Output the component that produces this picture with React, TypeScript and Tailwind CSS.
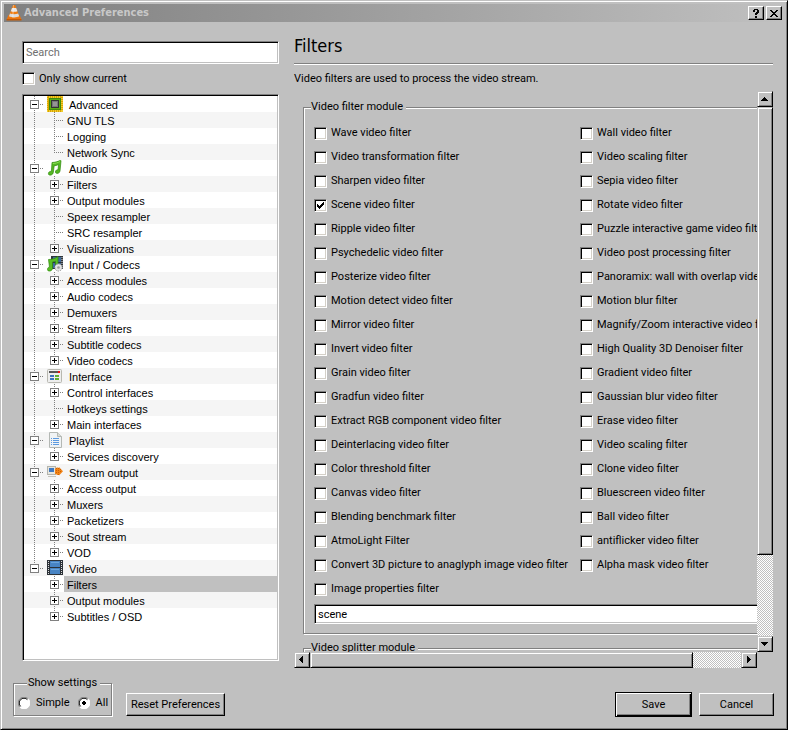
import React from "react";

type TreeItem = {
  label: string;
  icon?: React.ReactNode;
  children?: { label: string; leaf?: boolean; selected?: boolean }[];
};

const raised =
  "bg-[#c0c0c0] border border-t-white border-l-white border-r-black border-b-black shadow-[inset_-1px_-1px_0_#808080]";
const sunken =
  "bg-white border border-t-[#808080] border-l-[#808080] border-r-white border-b-white shadow-[inset_1px_1px_0_#000,inset_-1px_-1px_0_#c0c0c0]";
const scrollPart =
  "bg-[#c0c0c0] border border-t-[#c0c0c0] border-l-[#c0c0c0] border-r-black border-b-black shadow-[inset_1px_1px_0_#fff,inset_-1px_-1px_0_#808080]";
const track =
  "bg-[repeating-conic-gradient(#fff_0_25%,#c0c0c0_0_50%)] bg-[length:2px_2px]";
const etched =
  "border border-[#808080] shadow-[1px_1px_0_#fff,inset_1px_1px_0_#fff]";

/* icons */

const ConeIcon = () => (
  <svg width="16" height="16" viewBox="0 0 16 16">
    <path d="M2.500 10h11L15.500 14.500H.5z" fill="#ea7410" />
    <path d="M.5 14h15v1.500H.5z" fill="#c05a08" />
    <path d="M7 0h2.200l4.300 12c-2.500 1.600-8.500 1.600-11 0z" fill="#f07c10" />
    <path d="M6 3h4.200l1.200 3.200c-1.500.8-5 .8-6.600 0z" fill="#e8e8e8" />
    <path d="M4 8.500c2.500 1 5.500 1 8.200 0l1 2.800c-2.800 1.500-7.400 1.500-10.200 0z" fill="#dcdcdc" />
    <path d="M7 0h1l-.5 12.500H6z" fill="#fff" opacity=".35" />
  </svg>
);

const ChipIcon = () => (
  <svg width="16" height="16" viewBox="0 0 16 16" shapeRendering="crispEdges">
    <rect width="16" height="16" fill="#f0cc30" />
    <path
      d="M1.500 0v16M3.500 0v16M5.500 0v16M7.500 0v16M9.500 0v16M11.500 0v16M13.500 0v16"
      stroke="#d8a400"
    />
    <path
      d="M0 1.500h2M0 3.500h2M0 5.500h2M0 7.500h2M0 9.500h2M0 11.500h2M0 13.500h2M14 1.500h2M14 3.500h2M14 5.500h2M14 7.500h2M14 9.500h2M14 11.500h2M14 13.500h2"
      stroke="#d8a400"
    />
    <rect x="2" y="2" width="12" height="12" fill="#3f8a0c" />
    <rect x="3" y="3" width="10" height="10" fill="#5aac14" />
    <rect x="4" y="4" width="8" height="8" fill="#333" />
    <rect x="5" y="5" width="6" height="6" fill="#777" />
    <rect x="6" y="6" width="4" height="4" fill="#949494" />
  </svg>
);

const NoteIcon = () => (
  <svg width="16" height="16" viewBox="0 0 16 16">
    <path
      d="M5 2.500C8 2.500 11 1.500 13.500.3l.5.5-1 10.200c-.2 2.800-4.600 3.200-4.600 1C8.400 10.200 10 9.600 11 9.800L11.600 4.500C10 5.400 8.500 5.700 7.200 5.700L6.300 12.500c-.3 3-4.900 3.500-4.900 1.200 0-1.900 1.800-2.500 3-2.300z"
      fill="#55b823"
      stroke="#2f8a10"
      strokeWidth=".7"
    />
    <path d="M5.800 3.500c2.500 0 5-.8 7.200-1.900" stroke="#8de05a" fill="none" />
  </svg>
);

const CodecIcon = () => (
  <svg width="16" height="16" viewBox="0 0 16 16">
    <rect x="4" y="0" width="12" height="13" fill="#30363c" />
    <rect x="6" y="1" width="8" height="5" fill="#3d6a9c" />
    <rect x="6" y="7" width="8" height="5" fill="#3d6a9c" />
    <path d="M15 1v12" stroke="#ddd" strokeDasharray="1 1" />
    <path
      d="M1.500 3.500C5 3.500 8.500 2.500 11 .5V8.500H8.500V5.200L5.500 6V12.500c-.3 3-5 3.500-5 1 0-1.800 1.200-2.500 2-2.300z"
      fill="#58bd23"
      stroke="#2f8a10"
      strokeWidth=".7"
    />
    <circle cx="11.500" cy="11.500" r="3.600" fill="#e4e4e4" stroke="#999" strokeDasharray="1.500 1" />
    <circle cx="11.500" cy="11.500" r="1.300" fill="#999" />
  </svg>
);

const InterfaceIcon = () => (
  <svg width="16" height="16" viewBox="0 0 16 16">
    <rect x=".5" y="1.500" width="14" height="13" rx="1" fill="#eee" stroke="#b8b8b0" />
    <path d="M2 3h11v2H2z" fill="#555" />
    <path d="M11 3h2v2h-2z" fill="#e11" />
    <path d="M3 7h4v2H3zM3 10h4v2H3z" fill="#3a72c0" />
    <path d="M8 7h4v2H8zM8 10h4v2H8z" fill="#60b030" />
  </svg>
);

const PlaylistIcon = () => (
  <svg width="16" height="16" viewBox="0 0 16 16">
    <path d="M2.500.5h8l4 4v11h-12z" fill="#f0f3f5" stroke="#b4b8b4" />
    <path d="M10.500.5v4h4" fill="#d8dcd8" stroke="#b4b8b4" />
    <path
      d="M4 6.500h1M6 6.500h6M4 8.500h1M6 8.500h6M4 10.500h1M6 10.500h6M4 12.500h1M6 12.500h6"
      stroke="#5c9ae0"
    />
  </svg>
);

const StreamIcon = () => (
  <svg width="16" height="16" viewBox="0 0 16 16">
    <rect x=".5" y="2.500" width="8" height="8" fill="#e6e6e0" stroke="#b4b4ac" />
    <rect x="2" y="4" width="5" height="4" fill="#3f78c0" />
    <path d="M1 12.500h8" stroke="#c4c4bc" />
    <path d="M8 4.500h1.500V3.500h2V4.500h.5V3l4 4.300-4 4.200V10h-.5v1h-2v-1H8z" fill="#f08418" />
    <path d="M9.500 4v6M11.500 4v7M13.500 5v4" stroke="#d06000" strokeDasharray="1 1" />
  </svg>
);

const FilmIcon = () => (
  <svg width="16" height="16" viewBox="0 0 16 16" shapeRendering="crispEdges">
    <rect width="16" height="15" fill="#2c3238" />
    <rect x="3" y="1" width="10" height="6" fill="#4884c4" />
    <rect x="3" y="8" width="10" height="6" fill="#4884c4" />
    <path d="M4 2.500h8M4 9.500h8" stroke="#6aa4dc" />
    <path d="M1.500 1v14M14.500 1v14" stroke="#ddd" strokeDasharray="1 1" />
  </svg>
);

const tree: TreeItem[] = [
  {
    label: "Advanced",
    icon: <ChipIcon />,
    children: [
      { label: "GNU TLS", leaf: true },
      { label: "Logging", leaf: true },
      { label: "Network Sync", leaf: true },
    ],
  },
  {
    label: "Audio",
    icon: <NoteIcon />,
    children: [
      { label: "Filters" },
      { label: "Output modules" },
      { label: "Speex resampler", leaf: true },
      { label: "SRC resampler", leaf: true },
      { label: "Visualizations" },
    ],
  },
  {
    label: "Input / Codecs",
    icon: <CodecIcon />,
    children: [
      { label: "Access modules" },
      { label: "Audio codecs" },
      { label: "Demuxers" },
      { label: "Stream filters" },
      { label: "Subtitle codecs" },
      { label: "Video codecs" },
    ],
  },
  {
    label: "Interface",
    icon: <InterfaceIcon />,
    children: [
      { label: "Control interfaces" },
      { label: "Hotkeys settings", leaf: true },
      { label: "Main interfaces" },
    ],
  },
  {
    label: "Playlist",
    icon: <PlaylistIcon />,
    children: [{ label: "Services discovery" }],
  },
  {
    label: "Stream output",
    icon: <StreamIcon />,
    children: [
      { label: "Access output" },
      { label: "Muxers" },
      { label: "Packetizers" },
      { label: "Sout stream" },
      { label: "VOD" },
    ],
  },
  {
    label: "Video",
    icon: <FilmIcon />,
    children: [
      { label: "Filters", selected: true },
      { label: "Output modules" },
      { label: "Subtitles / OSD" },
    ],
  },
];

const filters = [
  ["Wave video filter", "Wall video filter"],
  ["Video transformation filter", "Video scaling filter"],
  ["Sharpen video filter", "Sepia video filter"],
  ["Scene video filter", "Rotate video filter"],
  ["Ripple video filter", "Puzzle interactive game video filter"],
  ["Psychedelic video filter", "Video post processing filter"],
  ["Posterize video filter", "Panoramix: wall with overlap video filter"],
  ["Motion detect video filter", "Motion blur filter"],
  ["Mirror video filter", "Magnify/Zoom interactive video filter"],
  ["Invert video filter", "High Quality 3D Denoiser filter"],
  ["Grain video filter", "Gradient video filter"],
  ["Gradfun video filter", "Gaussian blur video filter"],
  ["Extract RGB component video filter", "Erase video filter"],
  ["Deinterlacing video filter", "Video scaling filter"],
  ["Color threshold filter", "Clone video filter"],
  ["Canvas video filter", "Bluescreen video filter"],
  ["Blending benchmark filter", "Ball video filter"],
  ["AtmoLight Filter", "antiflicker video filter"],
  ["Convert 3D picture to anaglyph image video filter", "Alpha mask video filter"],
  ["Image properties filter"],
];

/* one 20px wide cell of the dotted tree lines */
const Branch = ({
  box,
  line = "full",
  arm = true,
}: {
  box?: "plus" | "minus";
  line?: "full" | "top" | "none";
  arm?: boolean;
}) => (
  <svg
    className="shrink-0"
    width="20"
    height="16"
    viewBox="0 0 20 16"
    shapeRendering="crispEdges"
    fill="none"
    stroke="#808080"
  >
    {line !== "none" && (
      <path d={line === "full" ? "M10.500 0v16" : "M10.500 0v9"} strokeDasharray="1 1" />
    )}
    {arm && <path d="M10 8.500h10" strokeDasharray="1 1" />}
    {box && (
      <>
        <rect x="6.500" y="4.500" width="8" height="8" fill="#fff" />
        <path d="M8 8.500h5" stroke="#000" />
        {box === "plus" && <path d="M10.500 6v5" stroke="#000" />}
      </>
    )}
  </svg>
);

const CheckBox = ({ label, checked }: { label: string; checked?: boolean }) => (
  <label className="flex items-center gap-1 whitespace-nowrap">
    <span className="grid shrink-0">
      <input
        type="checkbox"
        defaultChecked={checked}
        className="peer [grid-area:1/1] appearance-none w-[13px] h-[13px] bg-white border border-t-[#808080] border-l-[#808080] border-r-white border-b-white shadow-[inset_1px_1px_0_#000,inset_-1px_-1px_0_#d4d0c8]"
      />
      <svg
        className="[grid-area:1/1] invisible peer-checked:visible pointer-events-none"
        width="13"
        height="13"
        viewBox="0 0 13 13"
        shapeRendering="crispEdges"
      >
        <path d="M3 5h1v1h1v1h1v-1h1v-1h1v-1h1v-1h1v3h-1v1h-1v1h-1v1h-1v1h-1v-1h-1v-1h-1z" />
      </svg>
    </span>
    <span>{label}</span>
  </label>
);

const Radio = ({ label, checked }: { label: string; checked?: boolean }) => (
  <label className="flex items-center gap-[6px]">
    <span className="grid shrink-0">
      <input
        type="radio"
        name="show-settings"
        defaultChecked={checked}
        className="peer [grid-area:1/1] appearance-none w-3 h-3 rounded-full bg-white"
      />
      <svg className="[grid-area:1/1] pointer-events-none" width="12" height="12" viewBox="0 0 12 12" fill="none">
        <path d="M1.800 10.200A5.500 5.500 0 0 1 10.200 1.800" stroke="#808080" />
        <path d="M10.200 1.800A5.500 5.500 0 0 1 1.800 10.200" stroke="#fff" />
        <path d="M2.600 9.400A4.500 4.500 0 0 1 9.400 2.600" stroke="#000" />
      </svg>
      <svg
        className="[grid-area:1/1] invisible peer-checked:visible pointer-events-none"
        width="12"
        height="12"
        viewBox="0 0 12 12"
        shapeRendering="crispEdges"
      >
        <path d="M5 4h2v1h1v2h-1v1h-2v-1h-1v-2h1z" />
      </svg>
    </span>
    <span>{label}</span>
  </label>
);

const ArrowButton = ({ label, d }: { label: string; d: string }) => (
  <button
    type="button"
    aria-label={label}
    className={`w-4 h-4 shrink-0 flex items-center justify-center ${scrollPart}`}
  >
    <svg width="8" height="8" viewBox="0 0 8 8" shapeRendering="crispEdges">
      <path d={d} />
    </svg>
  </button>
);

const TreeView = () => {
  let row = 0;
  const stripe = () => (row++ % 2 ? "bg-[#f5f5f5]" : "bg-white");

  return (
    <ul className={`flex-1 min-h-0 overflow-hidden mt-[9px] p-px leading-[18px] font-['Liberation_Sans',Arial,sans-serif] ${sunken}`}>
      {tree.map((item, i) => {
        const last = i === tree.length - 1;
        return (
          <li key={item.label}>
            <div className={`flex h-4 ${stripe()}`}>
              <Branch box="minus" line={last ? "top" : "full"} />
              <span className="shrink-0 pl-[3px] pr-[6px]">{item.icon}</span>
              <span>{item.label}</span>
            </div>
            <ul>
              {item.children?.map((child, j) => (
                <li key={child.label} className={`flex h-4 ${stripe()}`}>
                  <Branch line={last ? "none" : "full"} arm={false} />
                  <Branch
                    box={child.leaf ? undefined : "plus"}
                    line={j === item.children!.length - 1 ? "top" : "full"}
                  />
                  <span className={`flex-1 pl-[3px] ${child.selected ? "bg-[#c0c0c0]" : ""}`}>
                    {child.label}
                  </span>
                </li>
              ))}
            </ul>
          </li>
        );
      })}
    </ul>
  );
};

const App = () => {
  return (
    <div className="h-screen flex flex-col p-[3px] bg-[#c0c0c0] border border-t-[#c0c0c0] border-l-[#c0c0c0] border-r-black border-b-black shadow-[inset_1px_1px_0_#fff,inset_-1px_-1px_0_#808080] text-black text-[11px] leading-4 font-[Roboto,Tahoma,sans-serif]">
      {/* title bar */}
      <header className="h-[18px] shrink-0 flex items-center px-[2px] bg-linear-to-r from-[#808080] to-[#c0c0c0]">
        <ConeIcon />
        <h2 className="flex-1 pl-[2px] font-bold text-[#c8c8c8] font-['DejaVu_Sans_Condensed',Tahoma,sans-serif]">
          Advanced Preferences
        </h2>
        <div className="flex gap-[2px]">
          <button type="button" aria-label="Help" className={`w-4 h-[14px] flex items-center justify-center ${raised}`}>
            <svg width="8" height="9" viewBox="0 0 8 9" shapeRendering="crispEdges">
              <path d="M2 0h4v1h1v3h-1v1h-1v1h-2v-2h1v-1h1v-2h-2v2h-2v-2h1zM3 7h2v2h-2z" />
            </svg>
          </button>
          <button type="button" aria-label="Close" className={`w-4 h-[14px] flex items-center justify-center ${raised}`}>
            <svg width="8" height="7" viewBox="0 0 8 7" shapeRendering="crispEdges">
              <path d="M0 0h2v1h1v1h2v-1h1v-1h2v1h-1v1h-1v1h-1v1h1v1h1v1h1v1h-2v-1h-1v-1h-2v1h-1v1h-2v-1h1v-1h1v-1h1v-1h-1v-1h-1v-1h-1z" />
            </svg>
          </button>
        </div>
      </header>

      <main className="flex-1 min-h-0 flex gap-[15px] pl-[18px] pr-[11px]">
        {/* left side */}
        <section className="w-[257px] shrink-0 flex flex-col pt-[19px] pb-[7px]">
          <input
            type="text"
            aria-label="Search"
            placeholder="Search"
            className={`h-[23px] shrink-0 px-[3px] placeholder:text-[#707070] ${sunken}`}
          />
          <div className="mt-2 h-[13px] flex items-center">
            <CheckBox label="Only show current" />
          </div>
          <TreeView />
        </section>

        {/* right side */}
        <section className="flex-1 min-w-0 flex flex-col pt-3">
          <h1 className="text-[18px] leading-6 font-['DejaVu_Sans_Condensed',Tahoma,sans-serif]">Filters</h1>
          <hr className="mt-[5px] border-0 border-t border-[#808080] h-[2px] shrink-0 bg-white" />
          <p className="mt-[6px]">Video filters are used to process the video stream.</p>

          <div className="flex-1 min-h-0 mt-1 grid grid-cols-[minmax(0,1fr)_16px] grid-rows-[minmax(0,1fr)_16px]">
            <div className="overflow-hidden">
              <div className="w-[520px] pt-2 pl-[9px] pr-2">
                <fieldset className={`px-[10px] pb-[9px] ${etched}`}>
                  <legend className="-ml-[3px] pr-[3px] bg-[#c0c0c0]">Video filter module</legend>
                  <div className="pt-[6px]">
                    {filters.map((pair) => (
                      <div key={pair[0]} className="grid grid-cols-[266px_1fr] h-6 items-center">
                        {pair.map((name) => (
                          <CheckBox key={name} label={name} checked={name === "Scene video filter"} />
                        ))}
                      </div>
                    ))}
                  </div>
                  <input
                    type="text"
                    aria-label="Video filter module"
                    defaultValue="scene"
                    className={`block w-full mt-[3px] h-5 px-[3px] ${sunken}`}
                  />
                </fieldset>
                <fieldset className={`mt-[6px] h-20 pl-[10px] ${etched}`}>
                  <legend className="-ml-[3px] pr-[3px] bg-[#c0c0c0]">Video splitter module</legend>
                </fieldset>
              </div>
            </div>

            <div className={`flex flex-col ${track}`}>
              <ArrowButton label="Scroll up" d="M3 2h1v1h1v1h1v1h1v1h-7v-1h1v-1h1v-1h1z" />
              <div className={`basis-[448px] ${scrollPart}`} />
              <div className="flex-1" />
              <ArrowButton label="Scroll down" d="M0 2h7v1h-1v1h-1v1h-1v1h-1v-1h-1v-1h-1v-1h-1z" />
            </div>

            <div className={`flex ${track}`}>
              <ArrowButton label="Scroll left" d="M5 0v7h-1v-1h-1v-1h-1v-1h-1v-1h1v-1h1v-1h1v-1z" />
              <div className={`basis-[383px] ${scrollPart}`} />
              <div className="flex-1" />
              <ArrowButton label="Scroll right" d="M2 0h1v1h1v1h1v1h1v1h-1v1h-1v1h-1v1h-1z" />
            </div>
          </div>
        </section>
      </main>

      <footer className="shrink-0 flex items-end pt-[7px] pb-[9px] pl-[9px] pr-[10px]">
        <fieldset className={`mb-px w-[99px] pl-1 pb-1 ${etched}`}>
          <legend className="ml-[9px] pl-px pr-[3px] bg-[#c0c0c0]">Show settings</legend>
          <div className="flex gap-2 pt-1">
            <Radio label="Simple" />
            <Radio label="All" checked />
          </div>
        </fieldset>
        <button type="button" className={`ml-[14px] mb-px w-[99px] h-[23px] ${raised}`}>
          Reset Preferences
        </button>
        <div className="flex-1" />
        <div className="flex items-center gap-[7px]">
          <button
            type="button"
            className="w-[77px] h-[25px] bg-[#c0c0c0] border border-black shadow-[inset_1px_1px_0_#fff,inset_-1px_-1px_0_#000,inset_-2px_-2px_0_#808080]"
          >
            Save
          </button>
          <button type="button" className={`w-[75px] h-[23px] ${raised}`}>
            Cancel
          </button>
        </div>
      </footer>
    </div>
  );
};

export default App;
